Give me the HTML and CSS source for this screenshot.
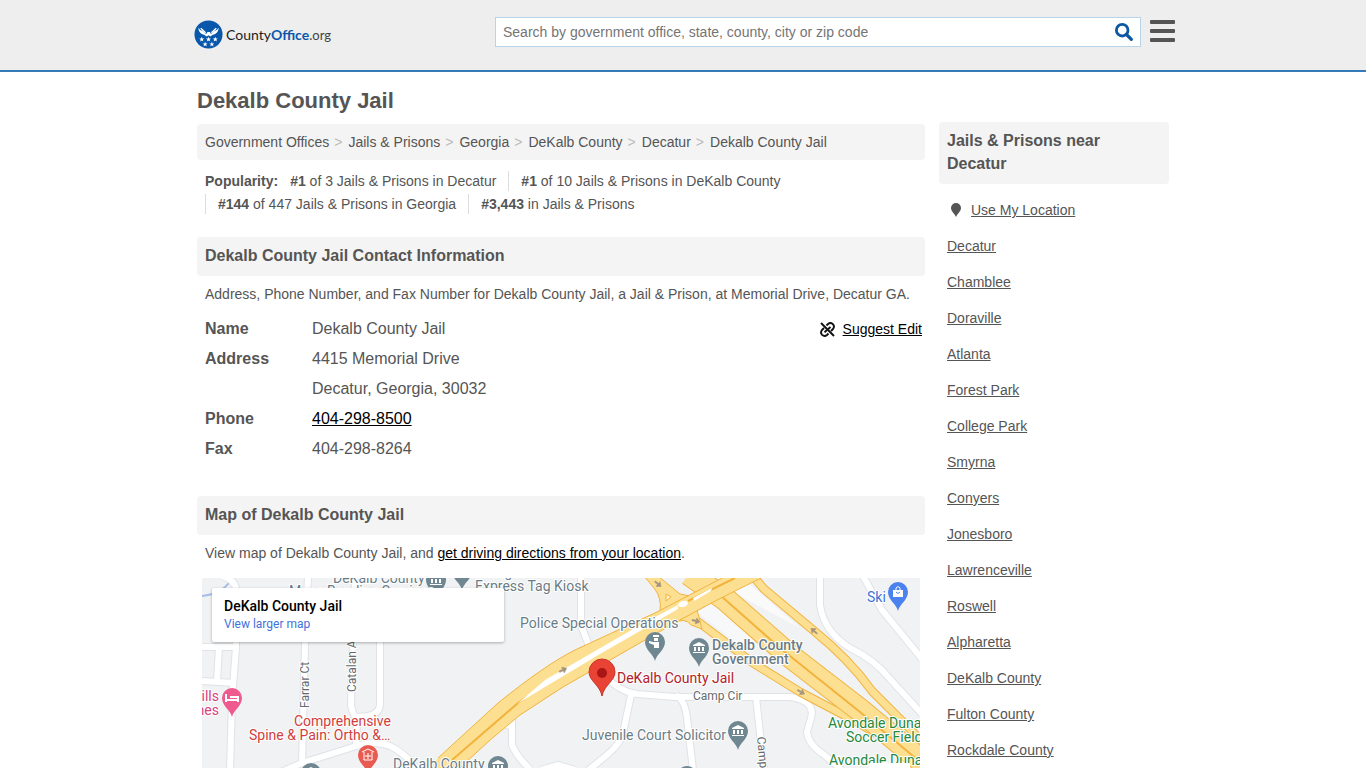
FILE: index.html
```html
<!DOCTYPE html>
<html lang="en">
<head>
<meta charset="utf-8">
<meta name="viewport" content="width=device-width, initial-scale=1">
<title>Dekalb County Jail</title>
<link rel="stylesheet" href="styles.css">
</head>
<body>
<header class="site-header">
  <div class="header-inner">
    <a class="logo" href="#" aria-label="CountyOffice.org">
      <svg class="logo-mark" viewBox="0 0 30 30" aria-hidden="true">
        <circle cx="15" cy="15" r="14.5" fill="#0957ab"/>
        <path d="M4.500 8Q6 10.500 9 11.500L12.500 14.500L14 12.300H16.500L17.500 14.500L21 11.500Q24 10.500 25.500 8Q25.500 12 22 14.500L19 15.500L17 17L15 15.800L13 17L11 15.500L8 14.500Q4.500 12 4.500 8Z" fill="#fff"/>
        <path d="M7 8.500L12 13.300M23 8.500L18 13.300" stroke="#fff" stroke-width="1.400"/>
        <defs><path id="star" d="M0-2.600L.7-.8 2.600-.8 1.100.4 1.700 2.300 0 1.100-1.700 2.300-1.100.4-2.600-.8-.7-.8Z"/></defs>
        <g fill="#fff"><use href="#star" x="8" y="20"/><use href="#star" x="15" y="20"/><use href="#star" x="22" y="20"/><use href="#star" x="11.500" y="25"/><use href="#star" x="18.500" y="25"/></g>
      </svg>
      <span class="logo-text">County<b>Office</b><span class="logo-tld">.org</span></span>
    </a>
    <form class="search" role="search">
      <input class="search-input" type="text" aria-label="Search" placeholder="Search by government office, state, county, city or zip code">
      <button class="search-button" type="button" aria-label="Search">
        <svg viewBox="0 0 18 18" width="18" height="18" aria-hidden="true"><circle cx="7.200" cy="7.200" r="5.800" fill="none" stroke="#0b57a4" stroke-width="2.800"/><path d="M11.500 11.500L16.300 16.300" stroke="#0b57a4" stroke-width="3.200" stroke-linecap="round"/></svg>
      </button>
    </form>
    <button class="menu-button" type="button" aria-label="Menu"><span></span><span></span><span></span></button>
  </div>
</header>
<div class="page">
  <main class="content">
    <h1 class="page-title">Dekalb County Jail</h1>
    <nav class="breadcrumb" aria-label="Breadcrumb">
      <a href="#">Government Offices</a><i>&gt;</i><a href="#">Jails &amp; Prisons</a><i>&gt;</i><a href="#">Georgia</a><i>&gt;</i><a href="#">DeKalb County</a><i>&gt;</i><a href="#">Decatur</a><i>&gt;</i><a href="#">Dekalb County Jail</a>
    </nav>
    <div class="popularity">
      <b class="pop-label">Popularity:</b><span class="pop-item first"><b>#1</b> of 3 Jails &amp; Prisons in Decatur</span><span class="pop-item"><b>#1</b> of 10 Jails &amp; Prisons in DeKalb County</span><span class="pop-item"><b>#144</b> of 447 Jails &amp; Prisons in Georgia</span><span class="pop-item"><b>#3,443</b> in Jails &amp; Prisons</span>
    </div>
    <section class="contact">
      <h2 class="heading">Dekalb County Jail Contact Information</h2>
      <p class="intro">Address, Phone Number, and Fax Number for Dekalb County Jail, a Jail &amp; Prison, at Memorial Drive, Decatur GA.</p>
      <div class="contact-row">
        <dl class="details">
          <dt>Name</dt><dd>Dekalb County Jail</dd>
          <dt>Address</dt><dd>4415 Memorial Drive<br>Decatur, Georgia, 30032</dd>
          <dt>Phone</dt><dd><a href="#">404-298-8500</a></dd>
          <dt>Fax</dt><dd>404-298-8264</dd>
        </dl>
        <div class="suggest">
          <svg viewBox="0 0 15 15" width="15" height="15" aria-hidden="true"><g fill="none" stroke="#111" stroke-width="1.900"><path d="M1 1L14 14"/><path d="M6.500 3.500L8 2Q10.500 0 12.900 2.100Q15 4.500 13 7L11 9"/><path d="M8.500 11.500L7 13Q4.500 15 2.100 12.900Q0 10.500 2 8L4 6"/><path d="M10.500 5L8 7.300M4.500 10.300L7 8"/></g></svg>
          <a href="#">Suggest Edit</a>
        </div>
      </div>
    </section>
    <section>
      <h2 class="heading">Map of Dekalb County Jail</h2>
      <p class="intro">View map of Dekalb County Jail, and <a href="#">get driving directions from your location</a>.</p>
      <div class="map">
        <svg class="map-canvas" viewBox="202 578 718 190" role="img" aria-label="Map of Dekalb County Jail">
          <defs>
            <path id="drop" d="M0 19C-1.500 12-10 8-10 0A10 10 0 0 1 10 0C10 8 1.500 12 0 19Z"/>
            <g id="bank" fill="#fff"><path d="M0-6L6-3V-2H-6V-3Z"/><path d="M-5-1H-3V3H-5ZM-1-1H1V3H-1ZM3-1H5V3H3ZM-6 4H6V5H-6Z"/></g>
            <g id="civic"><use href="#drop" fill="#6f8791"/><use href="#bank"/></g>
            <path id="arrow" d="M-4-.7H0V-3L4 0 0 3V.7H-4Z" fill="#a6957d" stroke="#a6957d" stroke-width=".6"/>
            <g id="streets">
              <path d="M222 576Q236 580 236 590V647L232 700L230 770M202 647H236M219 647L217 681M202 681L234 683M308 576L305 645L302 764M355 576L351 705Q353 716 357 718L356 746M380 640V705Q379 714 368 716L357 717M281 772L302 763L350 748Q374 739 390 746Q405 753 418 770"/>
              <path d="M581 576V625L589 646M605 676Q620 692 637 694L675 697H790Q816 701 811 718L807 732Q808 744 823 754L842 770M631 695L623 733Q620 744 607 755L586 772M505 724L512 727V745Q517 757 530 769M512 719V729M541 770L558 765 575 770M676 695Q685 700 687 718L693 770M756 697L764 770M820 576V605Q824 632 850 648Q875 660 890 679L922 714M863 576L882 610L922 659"/>
            </g>
            <path id="ramps" d="M686 616L697 621L753 663L800 692L857 722L925 764M752 575L764 589L813 630Q850 660 872 691L925 744"/>
            <path id="freeway" d="M689 574L725 599L790 656L860 710L930 768"/>
          </defs>
          <rect x="202" y="578" width="718" height="190" fill="#f0f2f4"/>
          <path d="M202 596Q222 594 231 580" fill="none" stroke="#a5bdec" stroke-width="2"/>
          <use href="#streets" fill="none" stroke="#dfe2e7" stroke-width="8"/>
          <use href="#streets" fill="none" stroke="#fff" stroke-width="6"/>
          <path d="M697 612L720 599L760 636L748 652Z" fill="#f7f8f9"/>
          <path d="M729 590L748 583L800 628Z" fill="#fafafa"/>
          <g fill="none" stroke-linejoin="round">
            <use href="#ramps" stroke="#f0b440" stroke-width="9"/>
            <use href="#ramps" stroke="#fddf92" stroke-width="7"/>
            <use href="#freeway" stroke="#f0b440" stroke-width="24"/>
            <use href="#freeway" stroke="#fddf92" stroke-width="22"/>
            <path d="M712 588L780 648L860 712L930 770" stroke="#f2b33c" stroke-width="2"/>
          </g>
          <path d="M644 576L654 588Q662 598 660 611L690 596L680 594L658 576Z" fill="#fddf92" stroke="#f0b440"/>
          <path d="M674 623Q685 617 691 625L702 629L697 610Z" fill="#fddf92" stroke="#f0b440"/>
          <path d="M438 758L498 703Q545 665 575 650L657 612L726 576H765L717 600L680 620L563 687L520 715Q490 739 465 763L458 770H430Z" fill="#fddf92"/>
          <path d="M438 758L498 703Q545 665 575 650L657 612L726 576M765 576L717 600L680 620L563 687L520 715Q490 739 465 763L458 770" fill="none" stroke="#f0b440" stroke-width="1"/>
          <path d="M452 760L518 703L535 691M688 601L735 578" fill="none" stroke="#f2b33c" stroke-width="2"/>
          <path d="M517 704L545 680L590 654L640 625L678 605L678 609L640 631L600 654L545 687Z" fill="#fff"/>
          <path d="M693 598L712 588L711 591L694 601Z" fill="#fff"/>
          <ellipse cx="683" cy="604" rx="5" ry="3" transform="rotate(-18 683 604)" fill="#fff"/>
          <path d="M666 594L671 597L666 601Z" fill="#fff3ce" stroke="#f2b33c"/>
          <use href="#arrow" transform="translate(563 670) rotate(-25)"/><use href="#arrow" transform="translate(658 584) rotate(40)"/><use href="#arrow" transform="translate(696 621) rotate(15)"/><use href="#arrow" transform="translate(801 692) rotate(30)"/><use href="#arrow" transform="translate(814 631) rotate(220)"/>
          <use href="#civic" x="436" y="580"/><use href="#civic" x="462" y="571"/>
          <use href="#civic" x="699" y="648"/><use href="#civic" x="738" y="731"/><use href="#civic" x="498" y="766"/><use href="#civic" x="311" y="773"/><use href="#civic" x="687" y="776"/>
          <use href="#drop" x="655" y="642" fill="#6f8791"/><path d="M653 635H659V637H653ZM654 638H658V641H654ZM653 642H659V648H654V645L649 643V641Z" fill="#fff"/>
          <use href="#drop" x="232" y="698" fill="#ef5b8f"/><path d="M226 694V702M227 700H238V702M230 697H238V700" fill="none" stroke="#fff" stroke-width="2"/>
          <use href="#drop" x="368" y="755" fill="#e95b50"/><path d="M362 752L368 749 374 752M364 752V760H372V752M368 753V759M365 756H371" fill="none" stroke="#fff" stroke-width="1"/>
          <use href="#drop" x="898" y="592" fill="#4a83ee"/><path d="M893 590H903V597H893Z" fill="#fff"/><path d="M896 590V588Q898 585 900 588V590" fill="none" stroke="#fff"/><path d="M896 592Q898 595 900 592" fill="none" stroke="#4a83ee"/>
          <path d="M602 696C600 685 589 681 589 672A13 13 0 0 1 615 672C615 681 604 685 602 696Z" fill="#e94335" stroke="#c9362d"/><circle cx="602" cy="673" r="5" fill="#a91616"/>
          <g class="map-label">
            <text x="333" y="583">DeKalb County</text><text x="289" y="596">Moore</text><text x="327" y="596">Bonding Services</text>
            <text x="475" y="577">Georgia</text><text x="475" y="591">Express Tag Kiosk</text>
            <text x="520" y="628">Police Special Operations</text>
            <text class="strong" x="712" y="650">Dekalb County</text><text class="strong" x="712" y="664">Government</text>
            <text x="582" y="740">Juvenile Court Solicitor</text><text x="393" y="769">DeKalb County</text>
            <text class="red" x="617" y="683">DeKalb County Jail</text>
            <text class="coral" x="294" y="726">Comprehensive</text><text class="coral" x="249" y="740">Spine &amp; Pain: Ortho &amp;…</text>
            <text class="pink" x="219" y="701" text-anchor="end">Hills</text><text class="pink" x="219" y="715" text-anchor="end">Homes</text>
            <text class="blue" x="867" y="602">Ski</text>
            <text class="green" x="828" y="728">Avondale Dunaire</text><text class="green" x="846" y="742">Soccer Field</text><text class="green" x="829" y="765">Avondale Dunaire</text>
            <text class="street" x="693" y="700">Camp Cir</text>
            <text class="street" transform="translate(309 708) rotate(-90)">Farrar Ct</text><text class="street" transform="translate(356 692) rotate(-90)">Catalan Ave</text><text class="street" transform="translate(757 737) rotate(85)">Camp Cir</text>
          </g>
          <rect x="869" y="763" width="41" height="6" rx="1" fill="#fff"/>
        </svg>
        <div class="map-card"><strong>DeKalb County Jail</strong><a href="#">View larger map</a></div>
      </div>
    </section>
  </main>
  <aside class="sidebar">
    <h2 class="heading">Jails &amp; Prisons near Decatur</h2>
    <ul class="places">
      <li class="locate"><svg viewBox="0 0 12 14" width="12" height="14" aria-hidden="true"><path d="M6 14C5 11 1 8.500 1 5A5 5 0 0 1 11 5C11 8.500 7 11 6 14Z" fill="#555"/></svg><a href="#">Use My Location</a></li>
      <li><a href="#">Decatur</a></li><li><a href="#">Chamblee</a></li><li><a href="#">Doraville</a></li><li><a href="#">Atlanta</a></li><li><a href="#">Forest Park</a></li><li><a href="#">College Park</a></li><li><a href="#">Smyrna</a></li><li><a href="#">Conyers</a></li><li><a href="#">Jonesboro</a></li><li><a href="#">Lawrenceville</a></li><li><a href="#">Roswell</a></li><li><a href="#">Alpharetta</a></li><li><a href="#">DeKalb County</a></li><li><a href="#">Fulton County</a></li><li><a href="#">Rockdale County</a></li>
    </ul>
  </aside>
</div>
</body>
</html>
```
FILE: styles.css
```css
* { box-sizing: border-box; }
body { margin: 0; background: #fff; color: #555; font: 14px/20px "Liberation Sans", Arial, sans-serif; }
h1, h2, p, ul, dl, dd { margin: 0; padding: 0; }
.site-header { background: #eee; border-bottom: 2px solid #337ab7; }
.header-inner { display: flex; align-items: flex-start; max-width: 984px; height: 70px; margin: 0 auto; padding: 16px 0 0 3px; }
.logo { display: flex; align-items: center; gap: 3px; width: 301px; padding-top: 4px; color: #222; text-decoration: none; }
.logo-mark { width: 29px; height: 29px; }
.logo-text { font: 14px/20px Lato, sans-serif; color: #222; }
.logo-text b { color: #0957ab; }
.logo-tld { color: #444; font-size: 13px; }
.search { display: flex; flex: 1; height: 30px; margin-top: 1px; background: #fff; border: 1px solid #b8d4ea; }
.search-input { flex: 1; border: 0; padding: 0 7px; background: none; font: inherit; color: #555; outline: 0; }
.search-input::placeholder { color: #757575; opacity: 1; }
.search-button { display: flex; align-items: center; border: 0; padding: 0 7px; background: none; }
.menu-button { display: flex; flex-direction: column; gap: 5px; width: 25px; margin: 4px 0 0 9px; padding: 0; border: 0; background: none; }
.menu-button span { width: 25px; height: 4px; border-radius: 1px; background: #555; }
.page { display: flex; gap: 14px; max-width: 972px; margin: 0 auto; }
.content { flex: 1; min-width: 0; }
.page-title { padding-top: 15px; margin-bottom: 9px; font-size: 22px; line-height: 28px; }
.breadcrumb { padding: 8px; border-radius: 4px; background: #f4f4f4; }
.breadcrumb a { color: #555; text-decoration: none; }
.breadcrumb i { padding: 0 6px 0 5px; color: #bbb; font-style: normal; }
.popularity { display: flex; flex-wrap: wrap; padding: 11px 100px 0 8px; line-height: 20px; row-gap: 3px; }
.pop-item { padding: 0 12px; border-left: 1px solid #ddd; }
.pop-item.first { border: 0; }
.heading { padding: 7px 8px 9px; border-radius: 4px; background: #f4f4f4; font-size: 16px; line-height: 23px; }
.contact { margin: 23px 0 32px; }
.intro { padding: 8px 8px 0; }
.intro a { color: #000; }
.contact-row { display: flex; justify-content: space-between; padding: 10px 3px 0 8px; }
.details { display: grid; grid-template-columns: 107px auto; font-size: 16px; line-height: 30px; }
.details dt { font-weight: bold; }
.details a, .suggest a { color: #000; }
.suggest { display: flex; align-items: center; gap: 8px; height: 30px; }
.map { position: relative; margin: 15px 5px 0; overflow: hidden; }
.map-canvas { display: block; width: 100%; }
.map-label { font: 14px Roboto, sans-serif; fill: #6b7c86; paint-order: stroke; stroke: #fff; stroke-width: 2px; }
.strong { font-weight: 500; }
.red { fill: #b3202a; }
.coral { fill: #cf403c; }
.pink { fill: #d7427f; }
.blue { fill: #3c73d6; }
.green { fill: #26883d; }
.street { font-size: 12px; fill: #66696d; }
.map-card { position: absolute; left: 10px; top: 10px; width: 292px; height: 54px; padding: 9px 12px; border-radius: 2px; background: #fff; box-shadow: 0 1px 3px rgba(0, 0, 0, .3); font-family: Roboto, sans-serif; }
.map-card strong { display: block; color: #000; font-size: 14px; font-weight: 500; line-height: 18px; }
.map-card a { display: block; color: #4272db; font-size: 12px; line-height: 18px; text-decoration: none; }
.sidebar { width: 230px; padding-top: 50px; }
.places { padding: 8px 8px 0; list-style: none; }
.places li { line-height: 36px; }
.places a { color: #555; }
.locate { display: flex; align-items: center; gap: 9px; padding-left: 3px; }
```
